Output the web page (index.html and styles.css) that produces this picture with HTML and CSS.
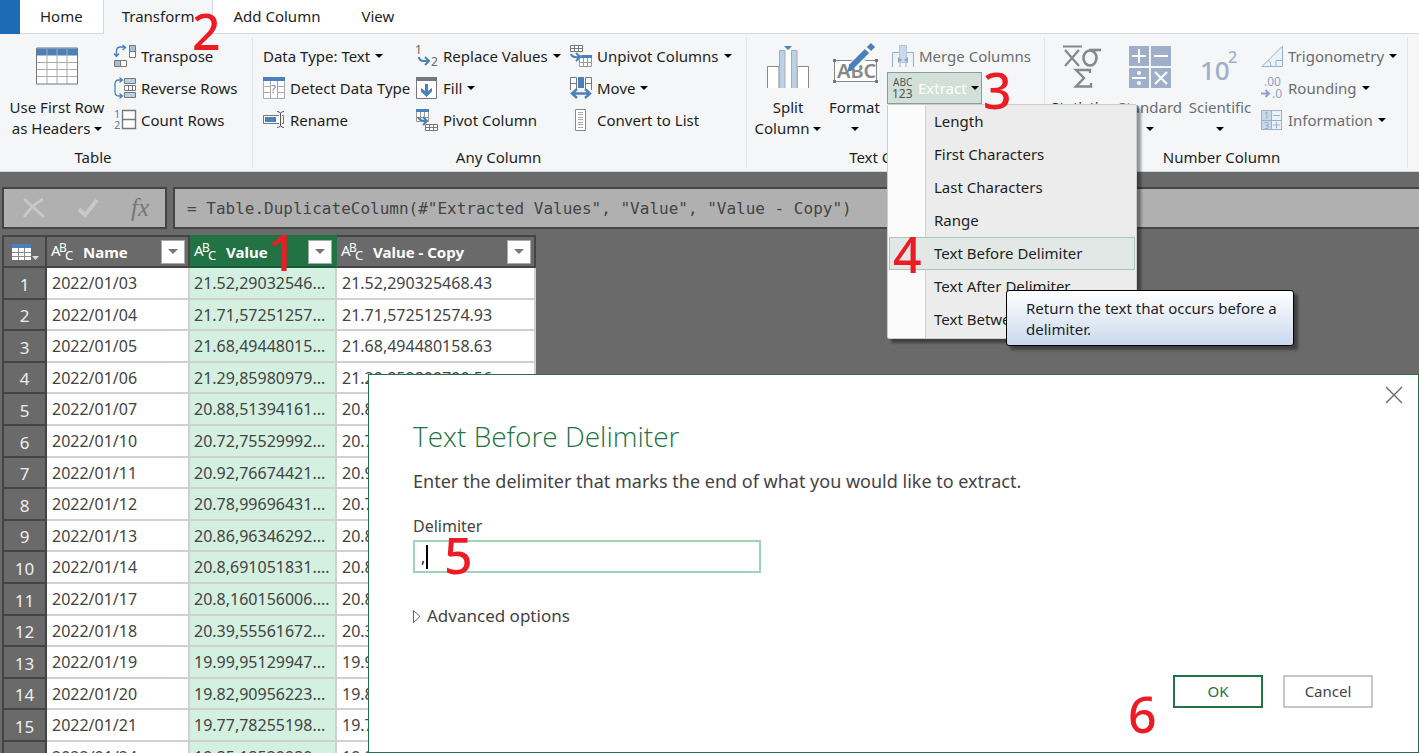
FILE: index.html
```html
<!DOCTYPE html>
<html lang="en">
<head>
<meta charset="utf-8">
<title>Power Query Editor</title>
<link rel="stylesheet" href="styles.css">
</head>
<body>
<nav class="tabs">
  <button class="file-tab" aria-label="File"></button>
  <button class="tab">Home</button>
  <button class="tab tab-active">Transform</button>
  <button class="tab tab-add">Add Column</button>
  <button class="tab tab-view">View</button>
  <span class="tabs-rest"></span>
</nav>

<section class="ribbon">
  <div class="group group-table">
    <div class="group-body">
      <button class="big">
        <svg width="42" height="37" viewBox="0 0 42 37"><path fill="#fff" d="M1 1h40v35H1z"/><path fill="#4a80bb" d="M1 1h40v7H1z"/><path d="M1 15h40M1 22h40M1 29h40M11 1v35M21 1v35M31 1v35" stroke="#aaa" fill="none"/><path d="M.5.5h41v36H.5z" stroke="#777" fill="none"/></svg>
        <span>Use First Row</span><span>as Headers <i class="caret"></i></span>
      </button>
      <div class="stack">
        <button class="small"><svg width="22" height="22" viewBox="0 0 22 22"><path fill="#9fc0dc" stroke="#777" d="M15.5.5h6v6h-6zM.5 15.5h6v6h-6z"/><path fill="#fff" stroke="#777" d="M15.5 6.500h6v6h-6zM6.500 15.500h6v6h-6z"/><path d="M2.500 11V6q0-4 4-4H11M8.500 0l3 2.500-3 2.500M0 8.500l2.500 3L5 8.500" fill="none" stroke="#4a80bb" stroke-width="1.400"/></svg>Transpose</button>
        <button class="small"><svg width="22" height="22" viewBox="0 0 22 22"><path fill="#b8cfe6" stroke="#777" d="M10.500 1.500h11v5h-11zM10.500 15.500h11v5h-11z"/><path fill="#fff" stroke="#777" d="M10.500 8.500h11v5h-11zM14.500 8.500v5M18.500 8.500v5"/><path d="M8 3H5Q1 3 1 7v8q0 4 4 4h3M5.500.5L8.500 3l-3 2.500M5.500 16.500l3 2.500-3 2.500" fill="none" stroke="#4a80bb" stroke-width="1.300"/></svg>Reverse Rows</button>
        <button class="small"><svg width="22" height="22" viewBox="0 0 22 22"><path fill="#fff" stroke="#777" stroke-width="1.400" d="M8.500 1.500h13v18h-13zM8.500 10.500h13"/><text x="0" y="9" font-size="11" fill="#4a80bb">1</text><text x="0" y="20" font-size="11" fill="#4a80bb">2</text></svg>Count Rows</button>
      </div>
    </div>
    <div class="group-label">Table</div>
  </div>

  <div class="group group-any">
    <div class="group-body">
      <div class="stack stack-type">
        <button class="small">Data Type: Text <i class="caret"></i></button>
        <button class="small"><svg width="22" height="22" viewBox="0 0 22 22"><path fill="#fff" stroke="#aaa" d="M.5.500h21v21H.500zM0 9.500h22M0 15.500h22M7.500 4v18M14.500 4v18"/><path fill="#4a80bb" d="M0 0h22v4H0z"/><path fill="#fff" d="M8 6h6v12H8z"/><text x="8" y="16" font-size="11" fill="#4a80bb">?</text></svg>Detect Data Type</button>
        <button class="small"><svg width="22" height="22" viewBox="0 0 22 22"><path fill="#fff" stroke="#777" d="M.5 6.500h20v8H.5z"/><path fill="#4a80bb" d="M2 8h11v5H2z"/><path fill="#fff" d="M16 6h3v9h-3z"/><path d="M17.500 4v13M14 2.500q3 0 3.500 2 .5-2 3.500-2M14 18.500q3 0 3.500-2 .5 2 3.500 2" fill="none" stroke="#555"/></svg>Rename</button>
      </div>
      <div class="stack stack-replace">
        <button class="small"><svg width="22" height="22" viewBox="0 0 22 22"><text x="-1" y="9" font-size="12" fill="#666">1</text><text x="15" y="21" font-size="12" fill="#666">2</text><path d="M3 12q0 4 5 4h4M9 12l4 4-4 4" fill="none" stroke="#4a80bb" stroke-width="2"/></svg>Replace Values <i class="caret"></i></button>
        <button class="small"><svg width="22" height="24" viewBox="0 0 22 24"><path fill="#fff" stroke="#777" d="M.5 1.500h20v21H.5z"/><path fill="#777" d="M0 1h21v4H0z"/><path d="M10.500 8v8" stroke="#4a80bb" stroke-width="3"/><path fill="#4a80bb" d="M5 12l5.500 4L16 12v3.500L10.500 21 5 15.500z"/></svg>Fill <i class="caret"></i></button>
        <button class="small"><svg width="22" height="22" viewBox="0 0 22 22"><path fill="#fff" stroke="#999" d="M.5.500h12v12H.500zM.5 8.500h12M4.500 3v10M8.500 3v10"/><path fill="#4a80bb" d="M0 0h13v3H0z"/><path fill="#fff" stroke="#777" d="M9.500 15.500h12v6h-12zM9.500 18.500h12M13.500 15.500v6M17.500 15.500v6"/><path d="M2 8q1 4 8 4M7 8l4 4-4 4" fill="none" stroke="#4a80bb" stroke-width="2"/></svg>Pivot Column</button>
      </div>
      <div class="stack">
        <button class="small"><svg width="22" height="22" viewBox="0 0 22 22"><path fill="#fff" stroke="#777" d="M.5.500h12v6H.500zM.5 3.500h12M4.500.5v6M8.500.5v6"/><path fill="#fff" stroke="#999" d="M9.500 10.500h12v11h-12zM9.500 17.500h12M13.500 13v9M17.500 13v9"/><path fill="#4a80bb" d="M13 10h9v3H9z"/><path d="M1 9q1 4 8 3M6 8l4 4-4 4" fill="none" stroke="#4a80bb" stroke-width="2"/></svg>Unpivot Columns <i class="caret"></i></button>
        <button class="small"><svg width="22" height="22" viewBox="0 0 22 22"><path fill="#fff" stroke="#777" d="M.5 13V.500h6V13M.5 6.500h6M15.500 13V.500h6V13M15.500 6.500h6"/><path fill="#4a80bb" d="M8 0h6v11H8z"/><path d="M3 16.500h16M7 12l-5 4.500L7 21M15 12l5 4.500-5 4.500" fill="none" stroke="#4a80bb" stroke-width="2.400"/></svg>Move <i class="caret"></i></button>
        <button class="small"><svg width="22" height="22" viewBox="0 0 22 22"><path fill="#fff" stroke="#888" d="M5.500.500h10v21h-10z"/><path stroke="#aaa" d="M8 3.500h5M8 5.500h5M8 8.500h5M8 10.500h5M8 13.500h5M8 15.500h5M8 18.500h5"/></svg>Convert to List</button>
      </div>
    </div>
    <div class="group-label">Any Column</div>
  </div>

  <div class="group group-text">
    <div class="group-body">
      <button class="big">
        <svg width="42" height="44" viewBox="0 0 42 44"><path fill="#fff" stroke="#888" d="M.5 44V22.500H12V44M30 44V22.500h11.500V44"/><path fill="#fff" d="M17 6h8v38h-8z"/><path fill="#bcd2e8" stroke="#aaa" d="M12.500 44V6.500H18V44M24.500 44V6.500H30V44"/><path fill="#4a80bb" d="M17 2h8l-4 4z"/></svg>
        <span>Split</span><span>Column <i class="caret"></i></span>
      </button>
      <button class="big">
        <svg width="46" height="44" viewBox="0 0 46 44"><path fill="#fff" stroke="#888" d="M2.500 16.500h42v21h-42z"/><path fill="#777" d="M1 15h3v3H1zM43 15h3v3h-3zM1 36h3v3H1zM43 36h3v3h-3z"/><text x="5" y="34" font-size="20" font-weight="600" fill="#888">ABC</text><path stroke="#f4f6f8" stroke-width="9" d="M20 23L37 6"/><path stroke="#4a80bb" stroke-width="6" d="M19 23L35 7M37 5l4-4"/><path fill="#4a80bb" d="M15 28l2.500-8 5.500 5.500z"/></svg>
        <span>Format</span><span><i class="caret"></i></span>
      </button>
      <div class="stack stack-extract">
        <button class="small faded"><svg width="22" height="22" viewBox="0 0 22 22"><path fill="#e9f1fa" stroke="#9fafca" d="M.5 22V7.500h7M21.500 22V7.500h-7M8 18v4M14 18v4"/><path fill="#c9d8ea" stroke="#b5c4da" d="M7.500.500h7v17h-7z"/><path fill="#8ea3c6" d="M6 12l4 3-4 3zM16 12l-4 3 4 3z"/></svg>Merge Columns</button>
        <div class="extract">
          <button class="small extract-button" aria-expanded="true"><svg width="22" height="22" viewBox="0 0 22 22"><text x="1" y="9" font-size="10" fill="#555">ABC</text><text x="0" y="21" font-size="12" fill="#555">123</text></svg>Extract <i class="caret"></i></button>
          <div class="menu" role="menu">
            <button role="menuitem">Length</button>
            <button role="menuitem">First Characters</button>
            <button role="menuitem">Last Characters</button>
            <button role="menuitem">Range</button>
            <button role="menuitem" class="chosen">Text Before Delimiter</button>
            <button role="menuitem">Text After Delimiter</button>
            <button role="menuitem">Text Between Delimiters</button>
            <div class="tooltip" role="tooltip">Return the text that occurs before a delimiter.</div>
          </div>
        </div>
      </div>
    </div>
    <div class="group-label">Text Column</div>
  </div>

  <div class="group group-number">
    <div class="group-body">
      <button class="big">
        <svg width="42" height="44" viewBox="0 0 42 44"><path d="M2 2.500h19M4 6l14 16M18 6L4 22" fill="none" stroke="#888" stroke-width="2.200"/><ellipse cx="29" cy="14" rx="6.500" ry="7.500" fill="none" stroke="#888" stroke-width="2.600"/><path d="M28 6h12" stroke="#888" stroke-width="2.600"/><path d="M29 29v-3H15l8 8-8 8.500h15V39" fill="none" stroke="#888" stroke-width="2.400"/></svg>
        <span>Statistics</span><span><i class="caret"></i></span>
      </button>
      <button class="big faded">
        <svg width="42" height="44" viewBox="0 0 42 44"><path fill="#9fafca" d="M0 2h20v20H0zM22 2h20v20H22zM0 24h20v20H0zM22 24h20v20H22z"/><path d="M3 12h14M10 5v14M25 12h14M3 34h14M26 28l12 12M38 28L26 40" stroke="#fff" stroke-width="2"/><circle cx="10" cy="29" r="2" fill="#fff"/><circle cx="10" cy="39" r="2" fill="#fff"/></svg>
        <span>Standard</span><span><i class="caret"></i></span>
      </button>
      <button class="big faded">
        <svg width="42" height="44" viewBox="0 0 42 44"><text x="1" y="36" font-size="26" font-weight="500" fill="#9fafca">10</text><text x="29" y="19" font-size="16" font-weight="500" fill="#9fafca">2</text></svg>
        <span>Scientific</span><span><i class="caret"></i></span>
      </button>
      <div class="stack">
        <button class="small faded"><svg width="22" height="22" viewBox="0 0 22 22"><path fill="#e9f1fa" stroke="#9fafca" d="M1 21.500L21.500 1v20.500zM21 15.500h-6V21M7 15q3 2 3 6"/></svg>Trigonometry <i class="caret"></i></button>
        <button class="small faded"><svg width="22" height="22" viewBox="0 0 22 22"><text x="3" y="9" font-size="12" fill="#8ea3c6">.00</text><text x="11" y="21" font-size="12" fill="#8ea3c6">.0</text><path d="M0 16.500h8M4.500 13L8 16.500 4.500 20" fill="none" stroke="#8ea3c6" stroke-width="2"/></svg>Rounding <i class="caret"></i></button>
        <button class="small faded"><svg width="22" height="22" viewBox="0 0 22 22"><path fill="#e9f1fa" d="M0 1h21v20H0z"/><path fill="#c9d8ea" d="M0 1h10v20H0z"/><path fill="none" stroke="#9fafca" d="M.5 1.500h20v19H.5zM10.500 1v20M0 11.500h21M12 6.500h7M12 16h7M15.500 12.500v7"/><text x="3" y="10" font-size="9" fill="#8ea3c6">1</text><text x="3" y="20" font-size="9" fill="#8ea3c6">3</text></svg>Information <i class="caret"></i></button>
      </div>
    </div>
    <div class="group-label">Number Column</div>
  </div>
</section>

<main class="workspace">
  <div class="formula-row">
    <div class="formula-tools">
      <button aria-label="Cancel formula"><svg width="24" height="22" viewBox="0 0 24 22"><path d="M2 2l20 18M21 2Q10 8 2 20" fill="none" stroke="#c8c8c8" stroke-width="3"/></svg></button>
      <button aria-label="Accept formula"><svg width="22" height="22" viewBox="0 0 22 22"><path d="M2 12l6 6L20 3" fill="none" stroke="#c8c8c8" stroke-width="4"/></svg></button>
      <button class="fx" aria-label="Insert function">fx</button>
    </div>
    <input class="formula" aria-label="Formula" value="= Table.DuplicateColumn(#&quot;Extracted Values&quot;, &quot;Value&quot;, &quot;Value - Copy&quot;)">
  </div>
  <table class="grid">
    <colgroup><col class="col-index"><col class="col-name"><col class="col-value"><col class="col-copy"></colgroup>
    <thead>
      <tr>
        <th><button class="grid-menu" aria-label="Table menu"><svg width="28" height="16" viewBox="0 0 28 16"><path fill="#fff" d="M0 0h19v16H0z"/><path fill="#4a80bb" d="M0 0h19v4H0z"/><path d="M0 8.500h19M0 12.500h19M6.500 4v12M12.500 4v12" stroke="#888"/><path fill="#ddd" d="M20 12h7l-3.500 4z"/></svg></button></th>
        <th><div class="head"><svg width="24" height="20" viewBox="0 0 24 20"><text x="0" y="14" font-size="15" fill="#fff">A</text><text x="8" y="10" font-size="12" fill="#fff">B</text><text x="14" y="18" font-size="13" fill="#fff">C</text></svg><span>Name</span><button class="filter" aria-label="Filter Name"></button></div></th>
        <th class="selected"><div class="head"><svg width="24" height="20" viewBox="0 0 24 20"><text x="0" y="14" font-size="15" fill="#fff">A</text><text x="8" y="10" font-size="12" fill="#fff">B</text><text x="14" y="18" font-size="13" fill="#fff">C</text></svg><span>Value</span><button class="filter" aria-label="Filter Value"></button></div></th>
        <th><div class="head"><svg width="24" height="20" viewBox="0 0 24 20"><text x="0" y="14" font-size="15" fill="#fff">A</text><text x="8" y="10" font-size="12" fill="#fff">B</text><text x="14" y="18" font-size="13" fill="#fff">C</text></svg><span>Value - Copy</span><button class="filter" aria-label="Filter Value - Copy"></button></div></th>
      </tr>
    </thead>
    <tbody>
      <tr><th>1</th><td>2022/01/03</td><td>21.52,29032546...</td><td>21.52,290325468.43</td></tr>
      <tr><th>2</th><td>2022/01/04</td><td>21.71,57251257...</td><td>21.71,572512574.93</td></tr>
      <tr><th>3</th><td>2022/01/05</td><td>21.68,49448015...</td><td>21.68,494480158.63</td></tr>
      <tr><th>4</th><td>2022/01/06</td><td>21.29,85980979...</td><td>21.29,859809790.56</td></tr>
      <tr><th>5</th><td>2022/01/07</td><td>20.88,51394161...</td><td>20.88,51394161</td></tr>
      <tr><th>6</th><td>2022/01/10</td><td>20.72,75529992...</td><td>20.72,75529992</td></tr>
      <tr><th>7</th><td>2022/01/11</td><td>20.92,76674421...</td><td>20.92,76674421</td></tr>
      <tr><th>8</th><td>2022/01/12</td><td>20.78,99696431...</td><td>20.78,99696431</td></tr>
      <tr><th>9</th><td>2022/01/13</td><td>20.86,96346292...</td><td>20.86,96346292</td></tr>
      <tr><th>10</th><td>2022/01/14</td><td>20.8,691051831....</td><td>20.8,691051831</td></tr>
      <tr><th>11</th><td>2022/01/17</td><td>20.8,160156006....</td><td>20.8,160156006</td></tr>
      <tr><th>12</th><td>2022/01/18</td><td>20.39,55561672...</td><td>20.39,55561672</td></tr>
      <tr><th>13</th><td>2022/01/19</td><td>19.99,95129947...</td><td>19.99,95129947</td></tr>
      <tr><th>14</th><td>2022/01/20</td><td>19.82,90956223...</td><td>19.82,90956223</td></tr>
      <tr><th>15</th><td>2022/01/21</td><td>19.77,78255198...</td><td>19.77,78255198</td></tr>
      <tr><th>16</th><td>2022/01/24</td><td>19.85,18520980...</td><td>19.85,18520980</td></tr>
    </tbody>
  </table>
</main>

<form class="dialog" role="dialog" aria-labelledby="dialog-title">
  <button type="button" class="close" aria-label="Close"><svg width="18" height="18" viewBox="0 0 18 18"><path d="M1 1l16 16M17 1L1 17" stroke="#666" stroke-width="1.300"/></svg></button>
  <h1 id="dialog-title">Text Before Delimiter</h1>
  <p>Enter the delimiter that marks the end of what you would like to extract.</p>
  <label for="delimiter">Delimiter</label>
  <div class="field"><input id="delimiter" type="text" value=","><span class="text-cursor"></span></div>
  <details><summary><svg width="8" height="13" viewBox="0 0 8 13"><path d="M.5.500v12l6.500-6z" fill="none" stroke="#666"/></svg>Advanced options</summary></details>
  <div class="actions"><button type="button" class="ok">OK</button><button type="button">Cancel</button></div>
</form>

<span class="step step-1">1</span>
<span class="step step-2">2</span>
<span class="step step-3">3</span>
<span class="step step-4">4</span>
<span class="step step-5">5</span>
<span class="step step-6">6</span>
</body>
</html>
```

FILE: styles.css
```css
* { box-sizing: border-box; }
body {
  margin: 0;
  height: 100vh;
  overflow: hidden;
  position: relative;
  display: flex;
  flex-direction: column;
  background: #6a6a6a;
  color: #1e1e1e;
  font: 15px/21px "Noto Sans", "Open Sans", sans-serif;
}
button { font: inherit; color: inherit; background: none; border: 0; padding: 0; margin: 0; white-space: nowrap; }
svg { flex: none; display: block; overflow: visible; }

.caret {
  display: inline-block;
  border: 4px solid transparent;
  border-top-color: #000;
  border-bottom: 0;
  vertical-align: 3px;
}

/* tabs */
.tabs { display: flex; height: 34px; flex: none; background: #fff; }
.file-tab { width: 20px; background: #1b6cb5; }
.tab { border-bottom: 1px solid #d5d7da; padding: 0 20px; }
.tab-active { padding: 0 17px 1px 18px; background: #f4f6f8; border: solid #d5d7da; border-width: 0 1px; }
.tab-add { padding: 0 21px; }
.tabs-rest { flex: 1; border-bottom: 1px solid #d5d7da; }

/* ribbon */
.ribbon {
  display: flex;
  flex: none;
  height: 138px;
  padding: 3px 0;
  background: #f4f6f8;
  border-bottom: 1px solid #d5d7da;
}
.group { display: flex; flex-direction: column; flex: none; border-right: 1px solid #e3e5e8; }
.group-table { width: 253px; }
.group-any { width: 494px; padding-left: 10px; }
.group-text { width: 298px; padding-left: 7px; }
.group-number { width: 363px; padding-left: 3px; }
.group-body { display: flex; padding-top: 3px; }
.group-label { margin-top: auto; padding-right: 12px; text-align: center; }
.group-table .group-label { padding-right: 66px; }
.big {
  display: flex;
  flex-direction: column;
  align-items: center;
  min-width: 65px;
  padding-top: 4px;
  height: 98px;
}
.big svg { height: 44px; margin-bottom: 9px; }
.big span { height: 21px; }
.group-table .big { width: 114px; }
.stack { display: flex; flex-direction: column; }
.stack-type { width: 153px; }
.stack-replace { width: 154px; }
.small { display: flex; align-items: center; gap: 5px; height: 32px; text-align: left; }
.faded { color: #6b6d70; }
.group-text .big:first-child, .group-number .big:first-child { width: 68px; }
.group-number .big:nth-child(2) { width: 68px; }
.group-number .big:nth-child(3) { width: 72px; }
.group-number .stack { padding-left: 5px; }
.stack-extract .small { padding-left: 5px; }

.extract { position: relative; }
.extract .extract-button {
  width: 95px;
  color: #fff;
  background: #d2e0d9;
  border: 1px solid #7fa592;
}
.extract .extract-button { gap: 4px; padding-left: 4px; }
.menu {
  position: absolute;
  z-index: 3;
  top: 32px;
  left: 0;
  width: 250px;
  padding: 0 1px 2px;
  display: flex;
  flex-direction: column;
  border: 1px solid #ccc;
  border-radius: 2px;
  background: linear-gradient(to right, #fbfbfb 37px, #d0d0d0 37px, #d0d0d0 38px, #ececec 38px);
  box-shadow: 4px 4px 3px #0006;
}
.menu button { height: 33px; padding-left: 44px; text-align: left; border: 1px solid transparent; }
.menu .chosen { background: #e1e8e5; border-color: #a9c6b9; }
.tooltip {
  position: absolute;
  top: 185px;
  left: 118px;
  width: 288px;
  padding: 7px 10px 5px 19px;
  border: 1px solid #000;
  border-radius: 3px;
  background: linear-gradient(#fff, #cad9ee);
  box-shadow: 4px 4px 3px #0006;
}

/* formula bar */
.workspace { flex: 1; min-height: 0; overflow: hidden; padding: 15px 0 0 2px; }
.formula-row { display: flex; gap: 6px; margin-bottom: 6px; }
.formula-tools, .formula { height: 42px; border: 2px solid #444; background: #b0b0b0; }
.formula-tools { width: 165px; display: flex; align-items: center; justify-content: space-between; padding: 0 16px 0 18px; }
.fx { color: #777; font: italic 25px/30px "Liberation Serif", serif; }
.formula {
  flex: 1;
  min-width: 0;
  margin-right: -2px;
  padding: 0 12px;
  color: #444;
  font: 16px "DejaVu Sans Mono", monospace;
}

/* data grid */
.grid { table-layout: fixed; width: 534px; border-collapse: separate; border-spacing: 0; color: #444; font-size: 16px; }
.col-index { width: 45px; }
.col-name { width: 143px; }
.col-value { width: 147px; }
.col-copy { width: 199px; }
.grid th, .grid td { padding: 0; white-space: nowrap; overflow: hidden; }
.grid thead th { height: 33px; color: #fff; background: #6a6a6a; border: solid #444; border-width: 2px 2px 2px 0; }
.grid th:first-child { border-left: 2px solid #444; }
.grid thead .selected { background: #217346; border-color: #217346; border-bottom-color: #185a36; }
.head { display: flex; align-items: center; height: 29px; padding: 0 3px 0 4px; font-size: 15px; }
.head svg { font-weight: 400; }
.head span { flex: 1; padding: 2px 0 0 8px; text-align: left; }
.grid-menu { display: block; margin-left: 8px; }
.filter { width: 24px; height: 24px; background: #fff; border: 1px solid #aaa; display: flex; align-items: center; justify-content: center; }
.filter::after { content: ""; border: 5px solid transparent; border-top-color: #777; border-bottom: 0; }
.grid tbody tr { height: 32px; }
.grid tbody tr:nth-child(5n + 2), .grid tbody tr:nth-child(5n + 4) { height: 31px; }
.grid td { padding: 1px 0 0 5px; background: #fff; border: solid #d0d0d0; border-width: 0 2px 2px 0; line-height: 21px; }
.grid td:nth-child(3) { padding-left: 4px; background: #d3f0e0; }
.grid tbody th { padding-top: 2px; color: #eee; background: #6a6a6a; border: solid #444; border-width: 0 2px 2px 2px; font-weight: 400; line-height: 21px; font-size: 17px; }

/* dialog */
.dialog {
  position: absolute;
  z-index: 4;
  inset: 374px 0 0 368px;
  padding: 42px 45px 44px 44px;
  display: flex;
  flex-direction: column;
  background: #fff;
  border: 1px solid #217346;
  color: #444;
  font-size: 16px;
}
.close { position: absolute; top: 11px; right: 15px; }
.dialog h1 { margin: 0; color: #217346; font: 300 28px/38px "Open Sans", sans-serif; }
.dialog p { margin: 14px 0 22px; font-size: 18px; line-height: 24px; }
.dialog label { line-height: 22px; margin-bottom: 3px; }
.field { position: relative; width: 348px; }
.field input { display: block; width: 100%; height: 33px; padding: 0 6px; border: 2px solid #9fd5b7; color: #222; font: 16px "Noto Sans", sans-serif; }
.text-cursor { position: absolute; left: 13px; top: 5px; width: 2px; height: 24px; background: #000; }
.dialog details { margin-top: 32px; font-size: 17px; line-height: 22px; }
.dialog summary { display: flex; align-items: center; gap: 6px; list-style: none; }
.actions { display: flex; justify-content: flex-end; gap: 20px; margin-top: auto; }
.actions button { width: 90px; height: 33px; border: 2px solid #c6c6c6; font-size: 15px; }
.actions .ok { color: #217346; border-color: #217346; }

/* numbered steps */
.step { position: absolute; z-index: 5; color: #ed1c24; font-size: 50px; font-weight: 500; line-height: 50px; }
.step-1 { left: 268px; top: 227px; }
.step-2 { left: 192px; top: 6px; }
.step-3 { left: 983px; top: 65px; }
.step-4 { left: 893px; top: 229px; }
.step-5 { left: 444px; top: 530px; }
.step-6 { left: 1128px; top: 689px; }
```
